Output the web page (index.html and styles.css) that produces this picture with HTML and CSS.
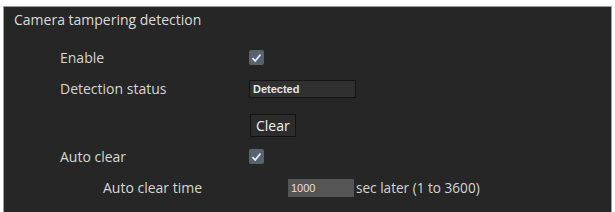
FILE: index.html
```html
<!DOCTYPE html>
<html lang="en">
<head>
  <meta charset="UTF-8">
  <title>Camera tampering detection</title>
  <link rel="stylesheet" href="styles.css">
</head>
<body>
  <div class="panel">
    <div class="title">Camera tampering detection</div>

    <div class="row">
      <label class="label">Enable</label>
      <span class="check"><svg width="11" height="10" viewBox="0 0 11 10"><path d="M1.5 5.2 L4.2 8 L9.5 1.5" fill="none" stroke="#e8eef5" stroke-width="1.8"/></svg></span>
    </div>

    <div class="row">
      <label class="label">Detection status</label>
      <div class="status">Detected</div>
    </div>

    <div class="row row-btn">
      <span class="label"></span>
      <button type="button" class="btn">Clear</button>
    </div>

    <div class="row">
      <label class="label">Auto clear</label>
      <span class="check"><svg width="11" height="10" viewBox="0 0 11 10"><path d="M1.5 5.2 L4.2 8 L9.5 1.5" fill="none" stroke="#e8eef5" stroke-width="1.8"/></svg></span>
    </div>

    <div class="row row-sub">
      <label class="label">Auto clear time</label>
      <input type="text" class="num" value="1000">
      <span class="unit">sec later (1 to 3600)</span>
    </div>
  </div>
</body>
</html>
```

FILE: styles.css
```css
body {
  margin: 0;
  background: #fff;
  font-family: "Open Sans", "DejaVu Sans", sans-serif;
  font-size: 14px;
  color: #d6d6d6;
}

.panel {
  margin: 6px 3px 0 3px;
  height: 206px;
  background: #262626;
  border: 1px solid #9c9c9c;
  border-bottom: none;
  box-sizing: border-box;
}

.title {
  padding: 3px 0 0 10px;
  height: 35px;
  box-sizing: border-box;
  line-height: 20px;
  color: #dcdcdc;
}

.row {
  display: flex;
  align-items: center;
  padding-left: 56px;
  height: 31px;
}

.label {
  width: 189px;
  flex: none;
}

.row-btn {
  height: 37px;
  align-items: flex-end;
  padding-bottom: 4px;
  box-sizing: border-box;
}

.row-sub {
  padding-left: 99px;
}

.row-sub .label {
  width: 185px;
}

.check {
  display: inline-flex;
  align-items: center;
  justify-content: center;
  width: 15px;
  height: 15px;
  background: #56626e;
  border-radius: 2px;
}

.status {
  width: 102px;
  height: 16px;
  line-height: 16px;
  background: #303030;
  border: 1px solid #151515;
  font-family: "Liberation Sans", Arial, sans-serif;
  font-size: 11px;
  font-weight: bold;
  color: #e6e6e6;
  padding-left: 3px;
}

.btn {
  height: 23px;
  padding: 0 5px;
  margin-left: 1px;
  background: #2c2c2c;
  border: 1px solid #141414;
  color: #f2f2f2;
  font-family: "Open Sans", "DejaVu Sans", sans-serif;
  font-size: 14px;
}

.num {
  width: 66px;
  height: 18px;
  box-sizing: border-box;
  background: #555;
  border: none;
  padding: 0 3px;
  color: #e9dde2;
  font-family: "Liberation Sans", Arial, sans-serif;
  font-size: 11px;
}

.unit {
  margin-left: 2px;
  font-size: 13.6px;
}
```
